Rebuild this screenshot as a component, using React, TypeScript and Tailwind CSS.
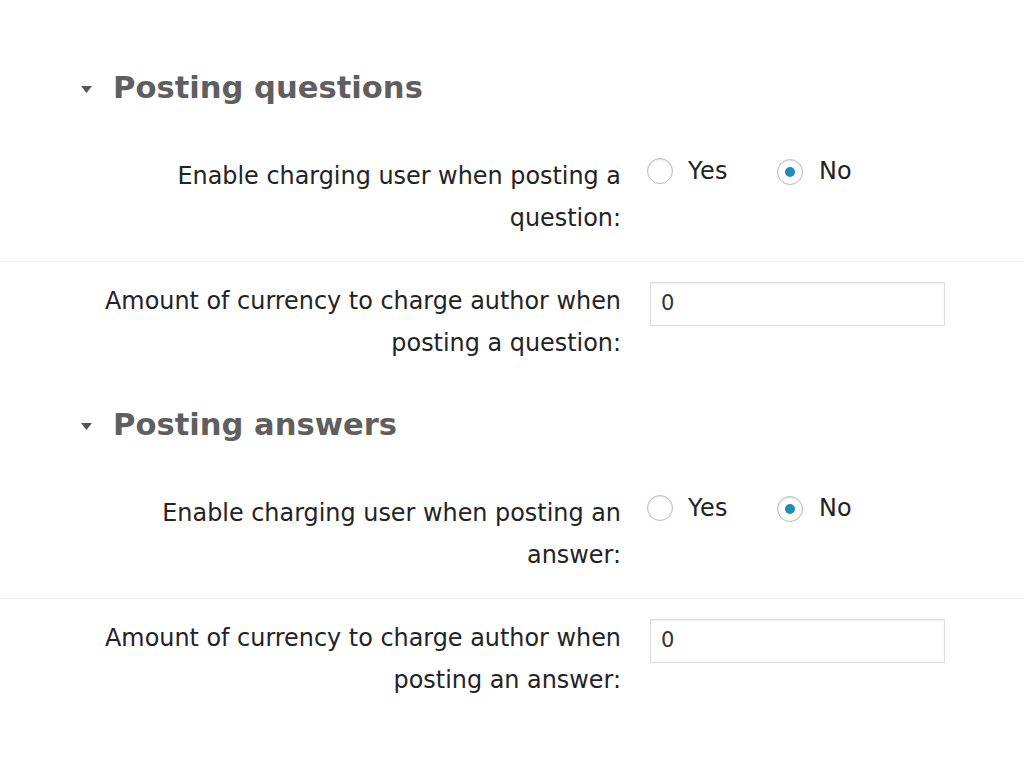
import React from "react";

function Radio({ checked }: { checked?: boolean }) {
  return (
    <span className="relative inline-flex h-[26px] w-[26px] shrink-0 items-center justify-center rounded-full border border-[#b4b9be] bg-white shadow-[inset_0_1px_2px_rgba(0,0,0,0.1)]">
      {checked ? <span className="h-[10px] w-[10px] rounded-full bg-[#1e8cbe]" /> : null}
    </span>
  );
}

function Heading({ children }: { children: React.ReactNode }) {
  return (
    <div className="flex h-[40px] items-center pl-[81px]">
      <svg width="11" height="8" viewBox="0 0 11 8" className="mr-[21px] mt-[3px]">
        <polygon points="0,0 11,0 5.5,7" fill="#555" />
      </svg>
      <h2 className="text-[30.6px] font-bold leading-[40px] text-[#5f5f5f]">{children}</h2>
    </div>
  );
}

function Row({
  label,
  border,
  children,
}: {
  label: React.ReactNode;
  border?: boolean;
  children: React.ReactNode;
}) {
  return (
    <div className={`flex pt-[18px] pb-[22px] ${border ? "border-b-[1.5px] border-[#efefef]" : ""}`}>
      <div className="w-[622px] shrink-0 whitespace-nowrap pr-[1px] text-right text-[23.9px] leading-[42px] text-[#232323]">
        {label}
      </div>
      <div className="pl-[25px]">{children}</div>
    </div>
  );
}

function Radios() {
  return (
    <div className="mt-[1px] flex items-center text-[23.9px] leading-[26px] text-[#232323]">
      <Radio />
      <span className="ml-[15px] tracking-[0.5px]">Yes</span>
      <span className="ml-[49px]">
        <Radio checked />
      </span>
      <span className="ml-[16px]">No</span>
    </div>
  );
}

function Amount() {
  return (
    <div className="ml-[3px] mt-[2px] flex h-[44px] w-[295px] items-center border border-[#dddddd] bg-white pl-[10px] text-[21px] text-[#333] shadow-[inset_0_1px_2px_rgba(0,0,0,0.07)]">
      0
    </div>
  );
}

export default function App() {
  return (
    <div className="min-h-[768px] w-[1024px] bg-white pt-[68px] font-['DejaVu_Sans',Verdana,sans-serif]">
      <Heading>Posting questions</Heading>
      <div className="mt-[29px]">
        <Row
          border
          label={
            <>
              Enable charging user when posting a<br />
              question:
            </>
          }
        >
          <Radios />
        </Row>
        <Row
          label={
            <>
              Amount of currency to charge author when
              <br />
              posting a question:
            </>
          }
        >
          <Amount />
        </Row>
      </div>
      <div className="mt-[19px]">
        <Heading>Posting answers</Heading>
      </div>
      <div className="mt-[29px]">
        <Row
          border
          label={
            <>
              Enable charging user when posting an
              <br />
              answer:
            </>
          }
        >
          <Radios />
        </Row>
        <Row
          label={
            <>
              Amount of currency to charge author when
              <br />
              posting an answer:
            </>
          }
        >
          <Amount />
        </Row>
      </div>
    </div>
  );
}
